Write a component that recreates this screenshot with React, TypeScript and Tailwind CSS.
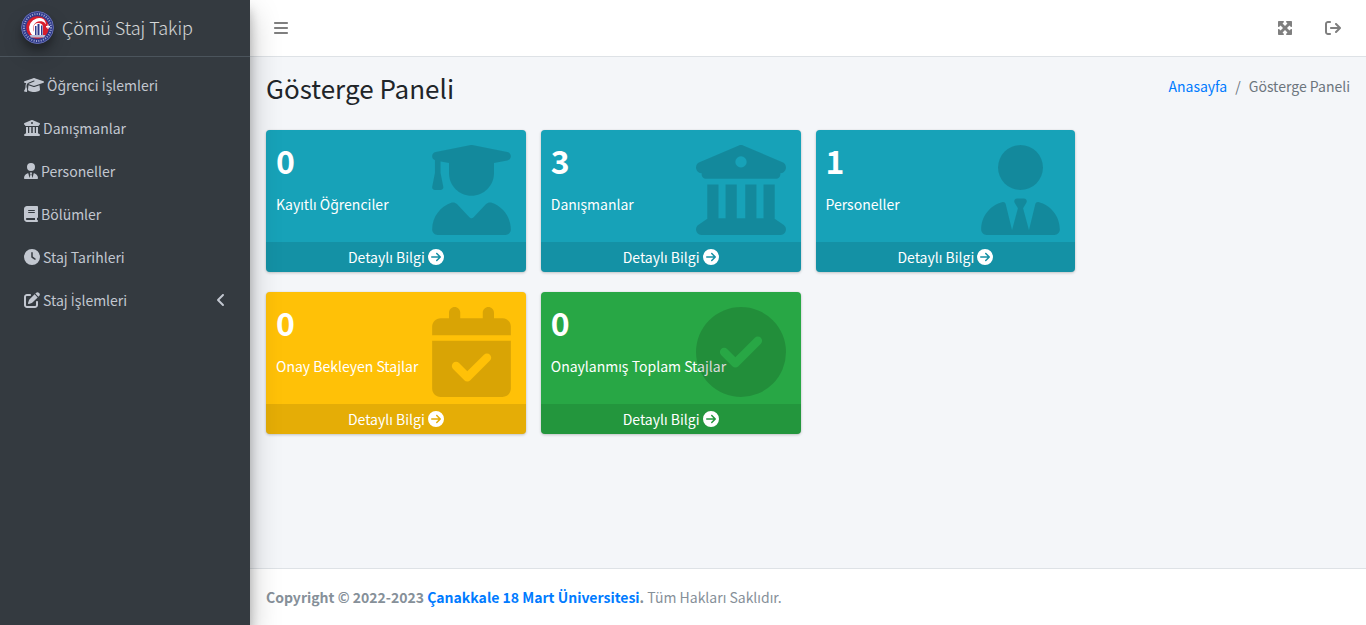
import React from 'react';
import type { IconType } from 'react-icons';
import {
  FaAngleLeft,
  FaArrowRightFromBracket,
  FaBars,
  FaBook,
  FaBuildingColumns,
  FaCalendarCheck,
  FaCircleArrowRight,
  FaCircleCheck,
  FaClock,
  FaGraduationCap,
  FaMaximize,
  FaPenToSquare,
  FaUserGraduate,
  FaUserTie,
} from 'react-icons/fa6';

type MenuItem = { label: string; icon: IconType; iconWidth: string; expandable?: boolean };

const menu: MenuItem[] = [
  { label: 'Öğrenci İşlemleri', icon: FaGraduationCap, iconWidth: 'w-5' },
  { label: 'Danışmanlar', icon: FaBuildingColumns, iconWidth: 'w-4' },
  { label: 'Personeller', icon: FaUserTie, iconWidth: 'w-3.5' },
  { label: 'Bölümler', icon: FaBook, iconWidth: 'w-3.5' },
  { label: 'Staj Tarihleri', icon: FaClock, iconWidth: 'w-4' },
  { label: 'Staj İşlemleri', icon: FaPenToSquare, iconWidth: 'w-4', expandable: true },
];

type Stat = { value: number; label: string; icon: IconType; iconWidth: string; color: string };

const registered: Stat[] = [
  {
    value: 0,
    label: 'Kayıtlı Öğrenciler',
    icon: FaUserGraduate,
    iconWidth: 'w-[79px]',
    color: 'bg-[#17a2b8]',
  },
  {
    value: 3,
    label: 'Danışmanlar',
    icon: FaBuildingColumns,
    iconWidth: 'w-[90px]',
    color: 'bg-[#17a2b8]',
  },
  {
    value: 1,
    label: 'Personeller',
    icon: FaUserTie,
    iconWidth: 'w-[79px]',
    color: 'bg-[#17a2b8]',
  },
];

const internships: Stat[] = [
  {
    value: 0,
    label: 'Onay Bekleyen Stajlar',
    icon: FaCalendarCheck,
    iconWidth: 'w-[79px]',
    color: 'bg-[#ffc107]',
  },
  {
    value: 0,
    label: 'Onaylanmış Toplam Stajlar',
    icon: FaCircleCheck,
    iconWidth: 'w-[90px]',
    color: 'bg-[#28a745]',
  },
];

function Logo() {
  return (
    <svg
      viewBox="0 0 66 66"
      aria-hidden="true"
      className="size-[33px] shrink-0 rounded-full shadow-[0_10px_20px_rgba(0,0,0,0.19),0_6px_6px_rgba(0,0,0,0.23)]"
    >
      <circle cx="33" cy="33" r="33" fill="#2f3a8c" />
      <circle cx="33" cy="33" r="32" fill="none" stroke="#7c84b8" strokeWidth="1.5" />
      <circle cx="33" cy="33" r="27" fill="none" stroke="#a3a9d0" strokeWidth="4" strokeDasharray="2 2.8" />
      <circle cx="33" cy="33" r="22.5" fill="#d81e2c" />
      <path d="M46 17A19 19 0 1 0 26 51V42A14 14 0 0 1 50 27A19 19 0 0 0 46 17Z" fill="#fff" />
      <path d="M25 49V31Q27 24 34 24Q43 24 44 31V49Z" fill="#fff" />
      <path d="M28 30h3v19h-3zM33 26h4v23h-4zM40 29h3v20h-3z" fill="#2f3a8c" />
      <path d="M53 27h2v3h3v3h-3v3h-2v-3h-3v-3h3z" fill="#fff" />
      <path d="M17 48h32l-3 5H20z" fill="#b9bdd4" />
    </svg>
  );
}

/* The CJK family has no dotted capital I, so that letter comes from Open Sans. */
function TurkishText({ text }: { text: string }) {
  return (
    <span>
      {text.split(/(İ)/).map((part, index) =>
        part === 'İ' ? (
          <span key={index} className="font-['Open_Sans',sans-serif]">
            {part}
          </span>
        ) : (
          part
        ),
      )}
    </span>
  );
}

function Sidebar() {
  return (
    <aside className="z-10 w-[250px] shrink-0 bg-[#343a40] shadow-[0_14px_28px_rgba(0,0,0,0.25),0_10px_10px_rgba(0,0,0,0.22)]">
      <a
        href="#"
        className="flex h-[57px] items-center gap-2 border-b border-[#4b545c] pr-2 pb-0.5 pl-[21px] text-lg font-light text-white/80"
      >
        <Logo />
        <span>Çömü Staj Takip</span>
      </a>
      <nav className="px-2 pt-2">
        <ul className="flex flex-col gap-[3px]">
          {menu.map(({ label, icon: Icon, iconWidth, expandable }) => (
            <li key={label}>
              <a href="#" className="flex h-10 items-center gap-[3px] px-4 text-[#c2c7d0]">
                <Icon className={`h-4 shrink-0 ${iconWidth}`} />
                <TurkishText text={label} />
                {expandable && <FaAngleLeft className="ml-auto h-4 w-2.5" />}
              </a>
            </li>
          ))}
        </ul>
      </nav>
    </aside>
  );
}

function StatCard({ value, label, icon: Icon, iconWidth, color }: Stat) {
  return (
    <section
      className={`relative rounded-sm text-white shadow-[0_0_1px_rgba(0,0,0,0.125),0_1px_3px_rgba(0,0,0,0.2)] ${color}`}
    >
      <div className="h-28 p-[10px]">
        <h3 className="text-[32px] leading-10 font-bold">{value}</h3>
        <p className="pt-3 leading-6">{label}</p>
      </div>
      <Icon className={`absolute top-[15px] right-[15px] h-[90px] text-black/15 ${iconWidth}`} />
      <a
        href="#"
        className="flex h-[30px] items-center justify-center gap-[3px] rounded-b-sm bg-black/10 text-white"
      >
        Detaylı Bilgi
        <FaCircleArrowRight className="size-4" />
      </a>
    </section>
  );
}

function StatRow({ items }: { items: Stat[] }) {
  return (
    <div className="grid grid-cols-4 gap-[15px]">
      {items.map((item) => (
        <StatCard key={item.label} {...item} />
      ))}
    </div>
  );
}

export default function App() {
  return (
    <div className="flex min-h-screen bg-[#f4f6f9] font-['Noto_Sans_CJK_SC','Noto_Sans',sans-serif] text-sm leading-6 text-[#212529]">
      <Sidebar />
      <div className="flex min-w-0 flex-1 flex-col">
        <header className="flex h-[57px] items-center justify-between border-b border-[#dee2e6] bg-white pr-[25px] pl-6 text-[#7f7f7f]">
          <button type="button" aria-label="Menü">
            <FaBars className="h-4 w-3.5" />
          </button>
          <div className="flex items-center gap-8">
            <button type="button" aria-label="Tam ekran">
              <FaMaximize className="h-4 w-4" />
            </button>
            <a href="#" aria-label="Çıkış">
              <FaArrowRightFromBracket className="h-4 w-4" />
            </a>
          </div>
        </header>
        <main className="flex-1 px-4">
          <div className="flex items-start justify-between pt-[14px] pb-[18px]">
            <h1 className="text-[26px] leading-[33px]">Gösterge Paneli</h1>
            <nav className="flex gap-2 pt-[3px] text-[#6c757d]">
              <a href="#" className="text-[#007bff]">
                Anasayfa
              </a>
              <span>/</span>
              <span>Gösterge Paneli</span>
            </nav>
          </div>
          <div className="flex flex-col gap-5 pt-2">
            <StatRow items={registered} />
            <StatRow items={internships} />
          </div>
        </main>
        <footer className="border-t border-[#dee2e6] bg-white p-4 text-[#869099]">
          <strong className="font-bold">
            Copyright © 2022-2023{' '}
            <a href="#" className="text-[#007bff]">
              Çanakkale 18 Mart Üniversitesi
            </a>
            .
          </strong>{' '}
          Tüm Hakları Saklıdır.
        </footer>
      </div>
    </div>
  );
}
